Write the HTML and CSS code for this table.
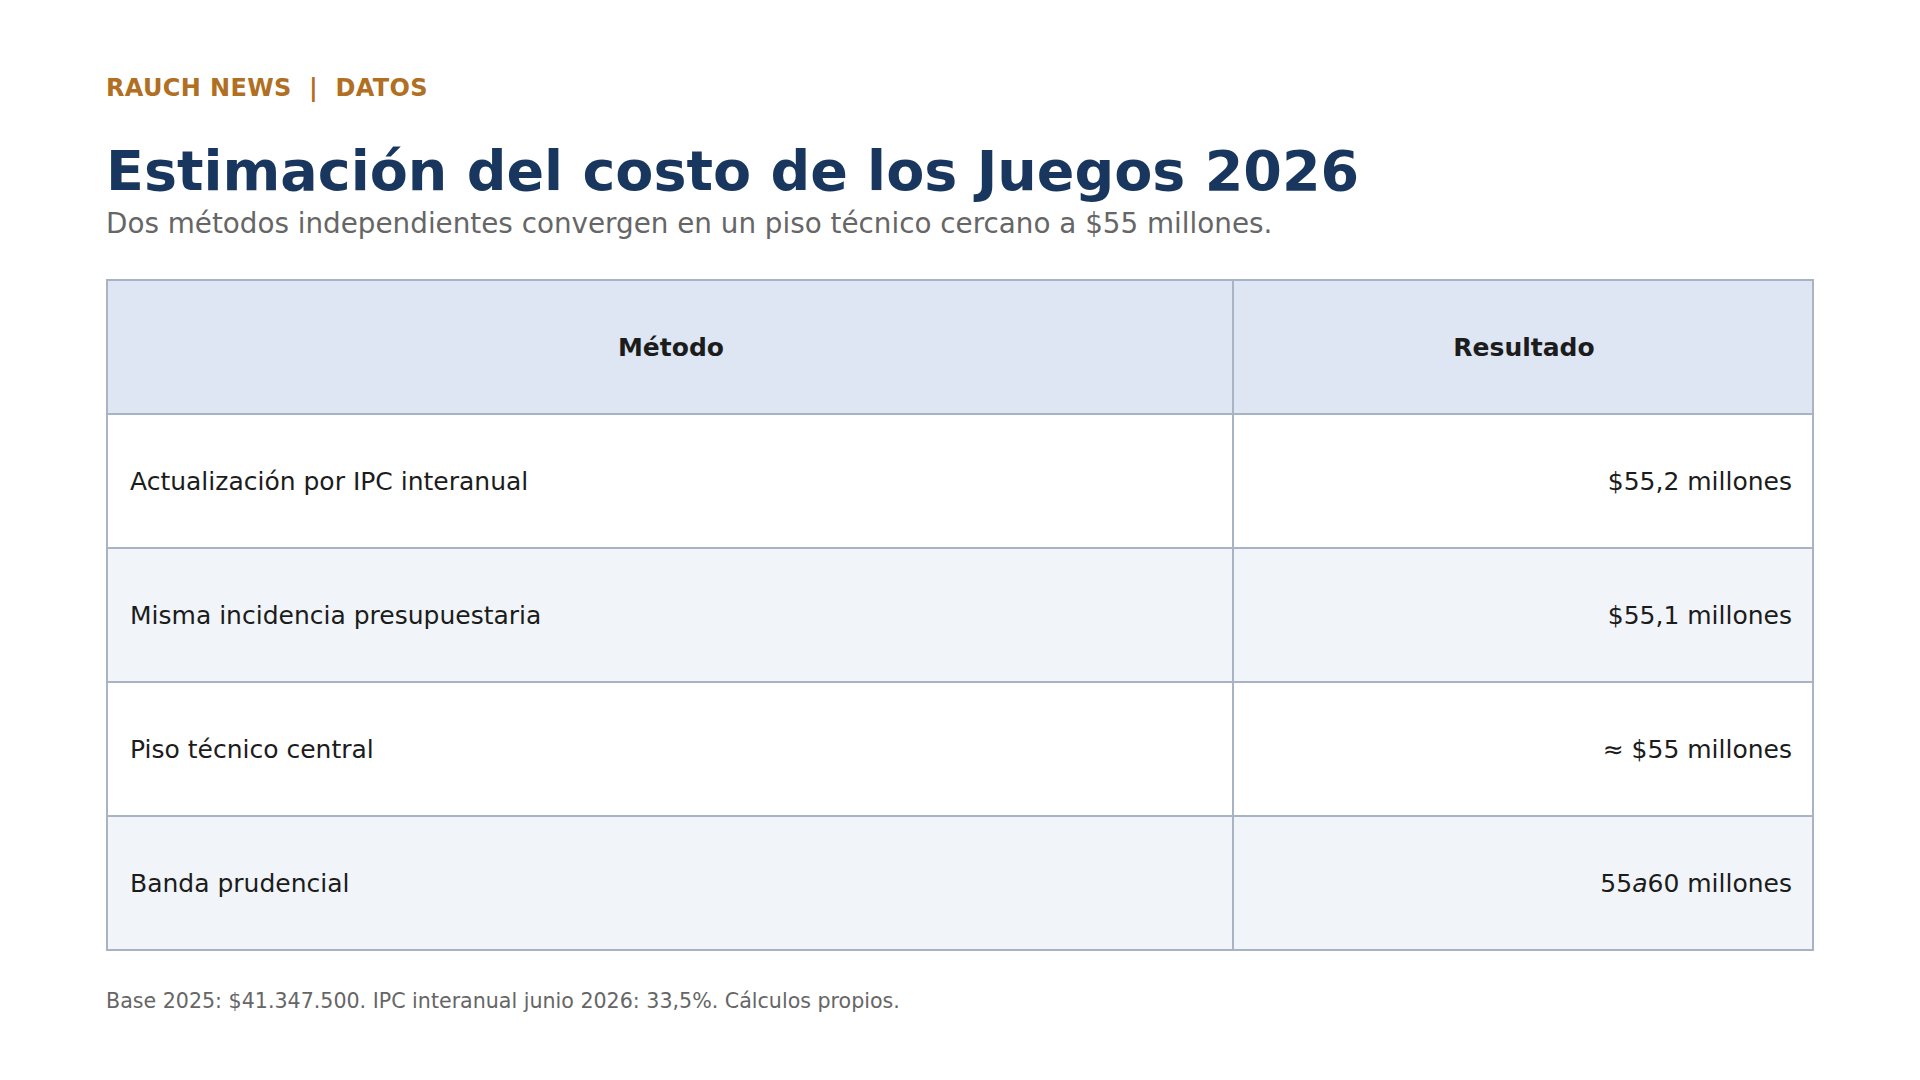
FILE: index.html
```html
<!DOCTYPE html>
<html lang="es">
<head>
<meta charset="utf-8">
<title>Estimación del costo de los Juegos 2026</title>
<link rel="stylesheet" href="styles.css">
</head>
<body>
<main class="page">
  <div class="kicker">RAUCH NEWS&nbsp; |&nbsp; DATOS</div>
  <h1 class="title">Estimación del costo de los Juegos 2026</h1>
  <p class="subtitle">Dos métodos independientes convergen en un piso técnico cercano a $55 millones.</p>
  <table class="data">
    <thead>
      <tr><th class="col-method">Método</th><th class="col-result">Resultado</th></tr>
    </thead>
    <tbody>
      <tr><td>Actualización por IPC interanual</td><td class="num">$55,2 millones</td></tr>
      <tr><td>Misma incidencia presupuestaria</td><td class="num">$55,1 millones</td></tr>
      <tr><td>Piso técnico central</td><td class="num">≈ $55 millones</td></tr>
      <tr><td>Banda prudencial</td><td class="num">55<i>a</i>60 millones</td></tr>
    </tbody>
  </table>
  <p class="note">Base 2025: $41.347.500. IPC interanual junio 2026: 33,5%. Cálculos propios.</p>
</main>
</body>
</html>
```
FILE: styles.css
```css
html, body {
  margin: 0;
  padding: 0;
  background: #ffffff;
}
body {
  font-family: "DejaVu Sans", "Liberation Sans", sans-serif;
  color: #1c1c1c;
}
.page {
  padding: 74px 106px 0 106px;
}
.kicker {
  font-size: 24px;
  font-weight: bold;
  color: #b06f22;
  line-height: 28px;
  letter-spacing: 0.35px;
}
.title {
  margin: 38px 0 0 0;
  font-size: 55.5px;
  line-height: 62px;
  font-weight: bold;
  color: #18365e;
}
.subtitle {
  margin: 4px 0 0 0;
  font-size: 27.8px;
  line-height: 36px;
  color: #666666;
}
.data {
  margin-top: 37px;
  width: 100%;
  border-collapse: collapse;
  table-layout: fixed;
  font-size: 25px;
}
.data th, .data td {
  box-sizing: border-box;
  border: 2px solid #a8b3c3;
  height: 134px;
  padding: 1px 20px 0 22px;
  vertical-align: middle;
}
.data th {
  background: #dde6f2;
  font-weight: bold;
  text-align: center;
  color: #1c1c1c;
}
.col-method { width: 66%; }
.data td.num { text-align: right; }
.data tbody tr:nth-child(even) td { background: #f1f5f9; }
.note {
  margin: 38px 0 0 0;
  font-size: 20.6px;
  line-height: 24px;
  color: #666666;
}
```
